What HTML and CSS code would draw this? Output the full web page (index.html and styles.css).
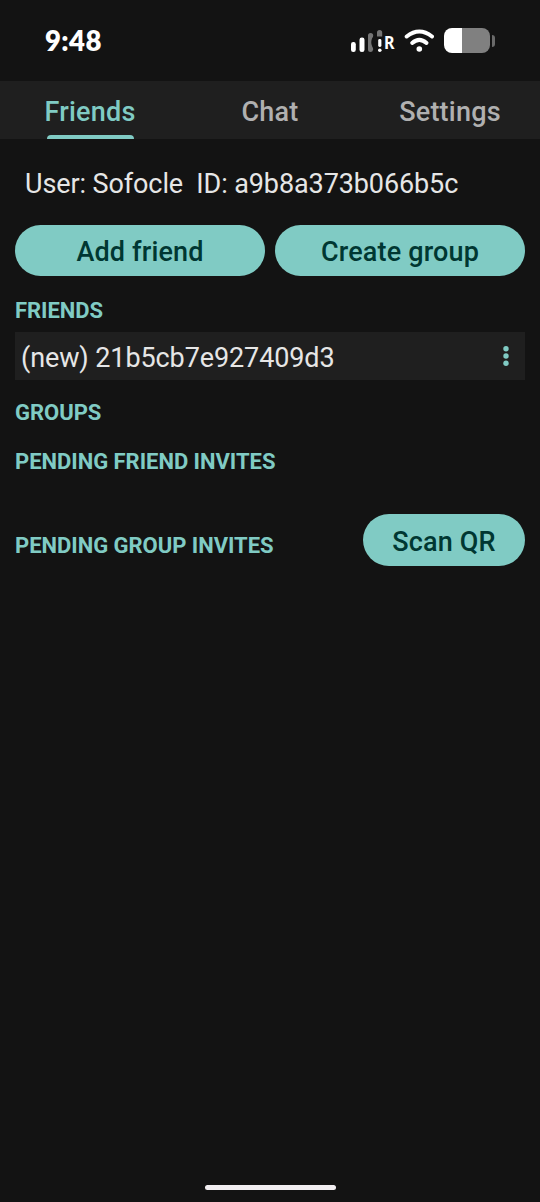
FILE: index.html
```html
<!DOCTYPE html>
<html lang="en">
<head>
<meta charset="utf-8">
<title>Friends</title>
<link rel="stylesheet" href="styles.css">
</head>
<body>
<div class="screen">
  <header class="status">
    <span class="time">9:48</span>
    <div class="status-icons">
      <svg class="signal" width="46" height="26" viewBox="350 28 46 26">
        <g fill="#fff">
          <rect x="351" y="42" width="4.8" height="10" rx="2.2"/>
          <rect x="359.5" y="37.5" width="5" height="14.5" rx="2.3"/>
          <rect x="378.2" y="39" width="3.2" height="8" rx="1.4"/>
          <circle cx="379.8" cy="50.3" r="1.8"/>
        </g>
        <path d="M368 35.500a2.600 2.600 0 0 1 5.200 0q0 1.500-1 2.500-2 4.500 0 8.500 1 1.500 1 3-.5 2.500-2.700 2.500-2.500 0-2.500-2.500z" fill="#757575"/>
        <path d="M377 32.500a2.600 2.600 0 0 1 5.200 0v4h-5.200z" fill="#757575"/>
        <text class="roaming" x="384" y="49" textLength="10.500" lengthAdjust="spacingAndGlyphs">R</text>
      </svg>
      <svg class="wifi" width="30" height="26" viewBox="404 28 30 26" fill="none" stroke="#fff" stroke-linecap="round">
        <path d="M406.700 36.500Q419.300 26.500 432 36.500" stroke-width="4"/>
        <path d="M412.200 43Q419.300 36.700 426.500 43" stroke-width="4"/>
        <circle cx="419.300" cy="49" r="2.800" fill="#fff" stroke="none"/>
      </svg>
      <div class="battery"><div class="cell"></div><div class="nub"></div></div>
    </div>
  </header>
  <nav class="tabs">
    <div class="tab active"><span>Friends</span></div>
    <div class="tab"><span>Chat</span></div>
    <div class="tab"><span>Settings</span></div>
  </nav>
  <main class="content">
    <p class="user">User: Sofocle&nbsp; ID: a9b8a373b066b5c</p>
    <div class="actions">
      <button class="btn add">Add friend</button>
      <button class="btn create">Create group</button>
    </div>
    <h2 class="heading friends">FRIENDS</h2>
    <div class="friend">
      <span class="name">(new) 21b5cb7e927409d3</span>
      <svg width="6" height="20" viewBox="0 0 6 20" fill="#80cbc4"><circle cx="3" cy="2.700" r="2.700"/><circle cx="3" cy="10" r="2.700"/><circle cx="3" cy="17.300" r="2.700"/></svg>
    </div>
    <h2 class="heading groups">GROUPS</h2>
    <h2 class="heading invites">PENDING FRIEND INVITES</h2>
    <div class="group-row">
      <h2 class="heading pending">PENDING GROUP INVITES</h2>
      <button class="btn scan">Scan QR</button>
    </div>
  </main>
  <footer class="gesture"><div class="handle"></div></footer>
</div>
</body>
</html>
```
FILE: styles.css
```css
* { box-sizing: border-box; }
body { margin: 0; background: #131313; font-family: Roboto, sans-serif; color: #e6e6e6; }
.screen { width: 540px; height: 1202px; display: flex; flex-direction: column; overflow: hidden; }
.status { height: 81px; padding: 0 45px; display: flex; justify-content: space-between; align-items: center; }
.time { font: 800 27.500px/27px Lato, sans-serif; letter-spacing: 0.4px; color: #fff; padding-bottom: 1px; }
.status-icons { display: flex; align-items: center; gap: 8px; }
.roaming { font: 700 18.500px "Noto Sans", sans-serif; fill: #fff; }
.battery { display: flex; align-items: center; gap: 2px; margin-left: 2px; }
.cell { width: 46px; height: 25px; border-radius: 8px; background: linear-gradient(to right, #fff 17.500px, #808080 17.500px); }
.nub { width: 3px; height: 12px; border-radius: 0 3px 3px 0; background: #6a6a6a; }
.tabs { height: 58px; background: #1f1f1f; display: grid; grid-template-columns: repeat(3, 1fr); }
.tab { display: flex; flex-direction: column; align-items: center; justify-content: flex-end; color: #b0b0b0; font-size: 27px; line-height: 32px; font-weight: 500; letter-spacing: 0.22px; padding-bottom: 11px; }
.tab.active { color: #80cbc4; padding-bottom: 0; }
.tab.active::after { content: ""; width: 87px; height: 4px; margin-top: 7px; background: #80cbc4; border-radius: 4px 4px 0 0; }
.content { flex: 1; padding: 0 15px; }
.user { margin: 29px 0 24.500px 10px; font-size: 27px; line-height: 32px; letter-spacing: -0.1px; white-space: nowrap; }
.actions { display: grid; grid-template-columns: 1fr 1fr; gap: 10px; }
.btn { height: 51.500px; border: 0; padding: 4px 0 0; border-radius: 26px; background: #80cbc4; color: #003732; font: 500 27px/32px Roboto, sans-serif; letter-spacing: 0.15px; }
.heading { margin: 0; color: #80cbc4; font-size: 22px; line-height: 26px; font-weight: 700; letter-spacing: -0.03px; white-space: nowrap; }
.friends { margin: 22px 0 8px; }
.friend { height: 48px; background: #1f1f1f; padding: 0 16px 0 6px; display: flex; align-items: center; justify-content: space-between; }
.name { font-size: 27px; line-height: 32px; letter-spacing: -0.1px; padding-top: 3px; }
.groups { margin-top: 20px; }
.invites { margin-top: 23px; }
.group-row { margin-top: 39px; display: flex; justify-content: space-between; align-items: center; }
.pending { padding-top: 12px; line-height: 26px; }
.scan { width: 162px; padding-top: 5px; }
.gesture { height: 17px; display: flex; justify-content: center; }
.handle { width: 131px; height: 5px; border-radius: 3px; background: #f2eef1; }
```
